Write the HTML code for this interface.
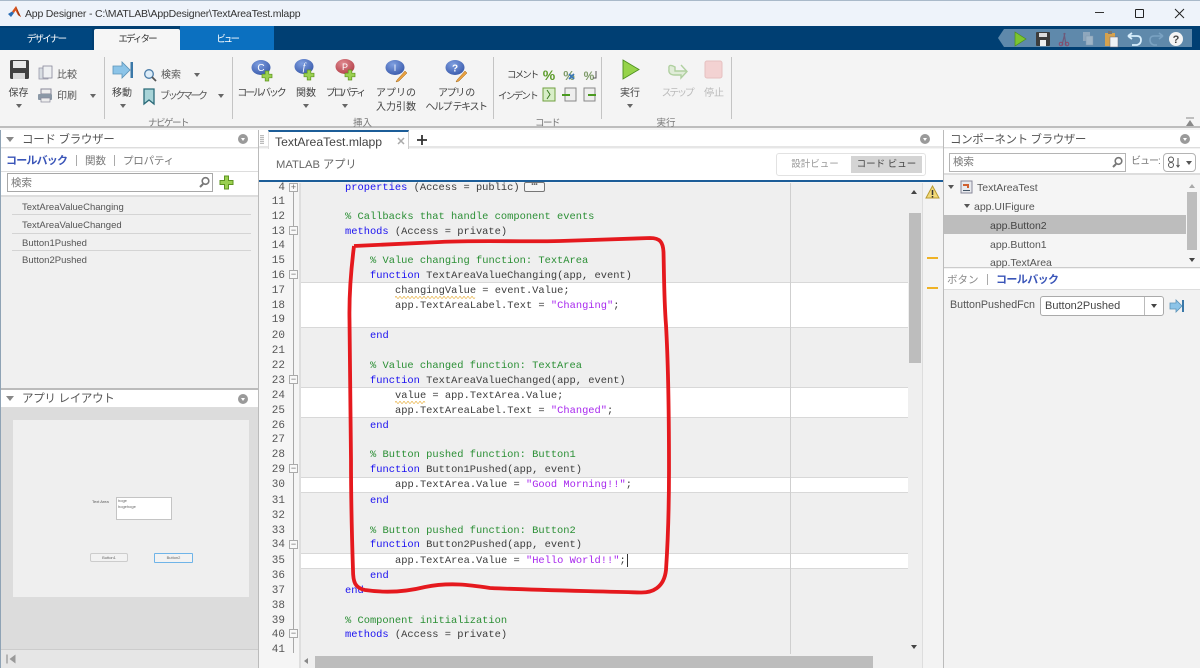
<!DOCTYPE html>
<html><head><meta charset="utf-8"><style>
*{box-sizing:border-box}
html,body{margin:0;padding:0}
body{width:1200px;height:668px;overflow:hidden;position:relative;background:#f4f4f4;font-family:"Liberation Sans","Noto Sans CJK JP",sans-serif;color:#444;filter:blur(.35px)}
.a{position:absolute;white-space:pre}
.t{position:absolute;white-space:pre;line-height:14px;font-size:10.5px;color:#444;margin-top:1px}
.r{margin-top:2px}
.c{text-align:center}
.l{position:absolute;left:345px;white-space:pre;font:10.4px/14px "Liberation Mono",monospace;color:#3c3c3c;margin-top:1px}
.n{position:absolute;left:262px;width:23px;text-align:right;font:11px/14px "Liberation Mono",monospace;color:#555;margin-top:1px}
.k{color:#1a10f0}.g{color:#2b8f35}.s{color:#a828ee}
.f{position:absolute;left:289px;width:9px;height:9px;border:1px solid #aaa;background:#f8f8f8;font:9px/7px "Liberation Sans";text-align:center;color:#666}
.w{position:absolute;left:301px;width:607px;background:#fff;border-top:1px solid #d8d8d8;border-bottom:1px solid #d8d8d8}
.v{position:absolute;width:1px;background:#c4c4c4;top:57px;height:62px}
.arrow{position:absolute;width:0;height:0;border-left:3.5px solid transparent;border-right:3.5px solid transparent;border-top:4px solid #666}
.hd{position:absolute;background:#fff;height:18px}
.dot{position:absolute;width:10px;height:10px;border-radius:50%;background:#9a9a9a}
.dot:after{content:"";position:absolute;left:2.5px;top:3.5px;border-left:2.5px solid transparent;border-right:2.5px solid transparent;border-top:3px solid #fff}
.sep{position:absolute;height:1px;background:#d4d4d4}
</style></head><body>

<!-- title bar -->
<div class="a" style="left:0;top:0;width:1200px;height:26px;background:#eef3fa;border-top:1px solid #a9b9c9"></div>
<svg class="a" style="left:7px;top:5px" width="15" height="14" viewBox="0 0 15 14"><path d="M1 9L5 6.5 7 8 4 12z" fill="#2a6db5"/><path d="M5 6.5L9 1l5 11-3-2-2.5-4.5L7 8z" fill="#d9541e"/><path d="M9 1l2.5 6L14 12 11 10z" fill="#a33a12"/></svg>
<div class="t" style="left:25px;top:6px;font-size:10.5px;color:#333;letter-spacing:-.2px">App Designer - C:\MATLAB\AppDesigner\TextAreaTest.mlapp</div>
<div class="a" style="left:1095px;top:12px;width:9px;height:1px;background:#333"></div>
<div class="a" style="left:1135px;top:9px;width:9px;height:9px;border:1px solid #222;border-radius:1px"></div>
<svg class="a" style="left:1174px;top:8px" width="11" height="11"><path d="M1 1L10 10M10 1L1 10" stroke="#222" stroke-width="1"/></svg>

<!-- tab bar -->
<div class="a" style="left:0;top:26px;width:1200px;height:24px;background:#003f73"></div>
<div class="a" style="left:0;top:28px;width:92px;height:22px;background:#00467f"></div>
<div class="t c r" style="left:0;top:31px;width:92px;color:#fff;font-size:9.5px;letter-spacing:-1.7px">デザイナー</div>
<div class="a" style="left:94px;top:29px;width:86px;height:21px;background:#f6f6f6;border-radius:2px 2px 0 0"></div>
<div class="t c r" style="left:94px;top:31px;width:86px;color:#333;font-size:9.5px;letter-spacing:-1.9px">エディター</div>
<div class="a" style="left:180px;top:26px;width:94px;height:24px;background:#0b70c0"></div>
<div class="t c r" style="left:180px;top:31px;width:94px;color:#fff;font-size:9.5px;letter-spacing:-2.4px">ビュー</div>

<!-- quick access -->
<svg class="a" style="left:998px;top:28px" width="194" height="20" viewBox="0 0 194 20">
<path d="M0 10L6 1H194V19H6z" fill="#5f89ab"/>
<path d="M17 4L28 11 17 18z" fill="#7cc52f" stroke="#4c8f1a" stroke-width=".7"/>
<rect x="38" y="4" width="14" height="14" rx="1" fill="#3c3c3c"/><rect x="41" y="5" width="8" height="4" fill="#ddd"/><rect x="42" y="12" width="6" height="6" fill="#eee"/>
<path d="M64 17L67 5M68 17L66 5" stroke="#6d5a7a" stroke-width="1.2"/><circle cx="63" cy="16" r="1.8" fill="none" stroke="#8a4a6a"/><circle cx="69" cy="16" r="1.8" fill="none" stroke="#8a4a6a"/>
<rect x="85" y="4" width="7" height="9" fill="#8ea7bd"/><rect x="88" y="8" width="7" height="9" fill="#9eb4c6" stroke="#7e98ae" stroke-width=".5"/>
<rect x="107" y="5" width="10" height="13" fill="#d6a24e"/><rect x="110" y="3" width="4" height="3" fill="#777"/><rect x="112" y="9" width="8" height="10" fill="#eef2f6" stroke="#667" stroke-width=".5"/>
<path d="M130 8H139Q143 8 143 12T139 17H134M130 8L134 5M130 8L134 11" fill="none" stroke="#d8eefc" stroke-width="1.8"/>
<path d="M165 8H156Q152 8 152 12T156 17H159M165 8L161 5M165 8L161 11" fill="none" stroke="#7aa2c2" stroke-width="1.6"/>
<circle cx="178" cy="11" r="7" fill="#f4f4f4"/><text x="178" y="15" font-size="11" font-weight="bold" fill="#444" text-anchor="middle" font-family="Liberation Sans">?</text>
</svg>

<!-- ribbon -->
<div class="a" style="left:0;top:50px;width:1200px;height:78px;background:#f4f4f4;border-bottom:2px solid #bdbdbd"></div>
<div class="v" style="left:104px"></div><div class="v" style="left:232px"></div><div class="v" style="left:493px"></div><div class="v" style="left:601px"></div><div class="v" style="left:731px"></div>

<svg class="a" style="left:0;top:50px" width="740" height="70" viewBox="0 50 740 70">
<defs>
<radialGradient id="bb" cx=".4" cy=".3" r=".8"><stop offset="0" stop-color="#7f9fe0"/><stop offset="1" stop-color="#3556a8"/></radialGradient>
<radialGradient id="rb" cx=".4" cy=".3" r=".8"><stop offset="0" stop-color="#e08a90"/><stop offset="1" stop-color="#b03a44"/></radialGradient>
</defs>
<!-- save -->
<rect x="10" y="60" width="19" height="19" rx="1.5" fill="#3f3f3f"/><rect x="13" y="61" width="13" height="7" fill="#e8e8e8"/><rect x="13" y="73" width="12" height="6" fill="#d8d8d8"/>
<!-- compare -->
<rect x="39" y="68" width="9" height="11" fill="#d8dde2" stroke="#99a" stroke-width=".8"/><rect x="43" y="66" width="9" height="12" fill="#eef0f2" stroke="#889" stroke-width=".8"/>
<!-- print -->
<rect x="41" y="89" width="10" height="5" fill="#eee" stroke="#889"/><rect x="38" y="94" width="14" height="6" rx="1" fill="#8b98a6"/><rect x="41" y="98" width="9" height="4" fill="#eee" stroke="#889" stroke-width=".7"/>
<!-- go to -->
<path d="M113 66H122V62L130 70 122 78V74H113z" fill="#8cc4e8" stroke="#5b93b8" stroke-width=".8"/><rect x="130.500" y="62" width="2.500" height="16" fill="#3a78a8"/>
<!-- find -->
<circle cx="149" cy="74" r="4.300" fill="#dcecf8" stroke="#4a7ca8" stroke-width="1.300"/><path d="M152 77L156 81" stroke="#555" stroke-width="1.800"/>
<!-- bookmark -->
<path d="M144 89H154V104L149 100 144 104z" fill="#a8d4d8" stroke="#2a6a78" stroke-width="1.300"/>
<!-- callback -->
<ellipse cx="261" cy="67.500" rx="9.500" ry="7.500" fill="url(#bb)"/><text x="261" y="71" font-size="10" fill="#fff" text-anchor="middle" font-family="Liberation Sans">C</text>
<path d="M265.200 71h3.600v3.200h3.200v3.600h-3.200v3.200h-3.600v-3.200h-3.200v-3.600h3.200z" fill="#9ad050" stroke="#5d9420" stroke-width=".7"/>
<!-- function -->
<ellipse cx="304" cy="66.500" rx="9.500" ry="7.500" fill="url(#bb)"/><text x="304" y="70" font-size="10" font-style="italic" fill="#fff" text-anchor="middle" font-family="Liberation Serif">f</text>
<path d="M307.200 70h3.600v3.200h3.200v3.600h-3.200v3.200h-3.600v-3.200h-3.200v-3.600h3.200z" fill="#9ad050" stroke="#5d9420" stroke-width=".7"/>
<!-- property -->
<ellipse cx="345" cy="66.500" rx="9.500" ry="7.500" fill="url(#rb)"/><text x="345" y="70" font-size="9" fill="#fff" text-anchor="middle" font-family="Liberation Sans">P</text>
<path d="M348.200 70h3.600v3.200h3.200v3.600h-3.200v3.200h-3.600v-3.200h-3.200v-3.600h3.200z" fill="#9ad050" stroke="#5d9420" stroke-width=".7"/>
<!-- input args -->
<ellipse cx="395" cy="67.500" rx="9.500" ry="7.500" fill="url(#bb)"/><text x="395" y="71" font-size="9" fill="#fff" text-anchor="middle" font-family="Liberation Sans">I</text>
<path d="M397 80L405 71 407 73 399 81 396 82z" fill="#e8a040" stroke="#a06a20" stroke-width=".5"/>
<!-- help -->
<ellipse cx="455" cy="67.500" rx="9.500" ry="7.500" fill="url(#bb)"/><text x="455" y="71.500" font-size="10" font-weight="bold" fill="#fff" text-anchor="middle" font-family="Liberation Sans">?</text>
<path d="M457 80L465 71 467 73 459 81 456 82z" fill="#e8a040" stroke="#a06a20" stroke-width=".5"/>
<!-- comment icons -->
<text x="549" y="80" font-size="14" font-weight="bold" fill="#5a9a28" text-anchor="middle" font-family="Liberation Sans">%</text>
<text x="569" y="80" font-size="13" font-weight="bold" fill="#7d9a68" text-anchor="middle" font-family="Liberation Sans">%</text><path d="M569 74l5 5m0-5l-5 5" stroke="#3a78b8" stroke-width="1.600"/>
<text x="589" y="80" font-size="12" font-weight="bold" fill="#7d9a68" text-anchor="middle" font-family="Liberation Sans">%</text><path d="M596 71v7h-3" fill="none" stroke="#555"/>
<rect x="543" y="88" width="12" height="13" fill="#d8eec8" stroke="#70a040"/><path d="M547 90l3 4.500-3 4.500" fill="none" stroke="#3a7a20"/>
<rect x="565" y="88" width="11" height="13" fill="#eee" stroke="#888"/><path d="M562 95h8" stroke="#4a9a20" stroke-width="2"/>
<rect x="584" y="88" width="11" height="13" fill="#eee" stroke="#888"/><path d="M588 95h8" stroke="#4a9a20" stroke-width="2"/>
<!-- run -->
<path d="M623 60L639 69.500 623 79z" fill="#96d34a" stroke="#4d9020" stroke-width=".9"/>
<!-- step -->
<path d="M686 71H675V67Q668 63 669 69Q668 75 675 75H681V78L687 71.500 681 65" fill="#e0ecd8" stroke="#b0d0a0" stroke-width="1.400"/>
<!-- stop -->
<rect x="705" y="61" width="17" height="17" rx="2" fill="#f3d2d2" stroke="#e6c0c0"/>
</svg>

<div class="t c r" style="left:0;top:85px;width:37px;font-size:10px">保存</div>
<div class="arrow" style="left:16px;top:104px"></div>
<div class="t r" style="left:57px;top:67px;font-size:10px;color:#555">比較</div>
<div class="t r" style="left:57px;top:88px;font-size:10px;color:#555">印刷</div>
<div class="arrow" style="left:90px;top:94px"></div>
<div class="t c r" style="left:108px;top:85px;width:28px;font-size:10px">移動</div>
<div class="arrow" style="left:120px;top:104px"></div>
<div class="t r" style="left:161px;top:67px;font-size:10px;color:#555">検索</div>
<div class="arrow" style="left:194px;top:73px"></div>
<div class="t r" style="left:160px;top:88px;font-size:10px;color:#555;letter-spacing:-2.400px">ブックマーク</div>
<div class="arrow" style="left:218px;top:94px"></div>
<div class="t c r" style="left:104px;top:115px;width:128px;font-size:9.500px;color:#777;letter-spacing:-1.500px">ナビゲート</div>
<div class="t c r" style="left:236px;top:85px;width:50px;font-size:10px;letter-spacing:-2.100px">コールバック</div>
<div class="t c r" style="left:292px;top:85px;width:28px;font-size:10px">関数</div>
<div class="arrow" style="left:303px;top:104px"></div>
<div class="t c r" style="left:322px;top:85px;width:46px;font-size:10px;letter-spacing:-2.200px">プロパティ</div>
<div class="arrow" style="left:342px;top:104px"></div>
<div class="t c r" style="left:374px;top:85px;width:44px;font-size:10px;line-height:14px;white-space:pre">アプリの
入力引数</div>
<div class="t c r" style="left:424px;top:85px;width:64px;font-size:10px;line-height:14px;letter-spacing:-1.400px">アプリ の
ヘルプ テキスト</div>
<div class="t c r" style="left:232px;top:115px;width:261px;font-size:9.500px;color:#777">挿入</div>
<div class="t r" style="left:507px;top:67px;font-size:9.500px;letter-spacing:-1.900px">コメント</div>
<div class="t r" style="left:498px;top:88px;font-size:9.500px;letter-spacing:-1.700px">インデント</div>
<div class="t c r" style="left:493px;top:115px;width:108px;font-size:9.500px;color:#777;letter-spacing:-1.500px">コード</div>
<div class="t c r" style="left:615px;top:85px;width:30px;font-size:10px">実行</div>
<div class="arrow" style="left:627px;top:104px"></div>
<div class="t c r" style="left:655px;top:85px;width:44px;font-size:10px;color:#bbb;letter-spacing:-2.300px">ステップ</div>
<div class="t c r" style="left:700px;top:85px;width:28px;font-size:10px;color:#bbb">停止</div>
<div class="t c r" style="left:601px;top:115px;width:130px;font-size:9.500px;color:#777">実行</div>
<svg class="a" style="left:1185px;top:117px" width="10" height="10"><path d="M1 1h8" stroke="#888"/><path d="M5 3L9 9H1z" fill="#888"/></svg>

<!-- left panel -->
<div class="a" style="left:0;top:130px;width:259px;height:538px;background:#f0f0f0;border-right:1px solid #bbb;border-left:1px solid #8fa3b5"></div>
<div class="hd" style="left:1px;top:130px;width:257px;border-bottom:1px solid #ddd"></div>
<div class="arrow" style="left:6px;top:137px;border-top-color:#888;border-left-width:4px;border-right-width:4px;border-top-width:5px"></div>
<div class="t r" style="left:22px;top:131px;font-size:11.500px;color:#555;letter-spacing:-.3px">コード ブラウザー</div>
<div class="dot" style="left:238px;top:134px"></div>
<div class="a" style="left:1px;top:149px;width:257px;height:23px;background:#fff;border-bottom:1px solid #ddd"></div>
<div class="t" style="left:6px;top:153px;font-size:11px;font-weight:bold;color:#3a55b8;letter-spacing:-.8px">コールバック</div>
<div class="a" style="left:76px;top:155px;width:1px;height:11px;background:#aaa"></div>
<div class="t" style="left:85px;top:153px;font-size:10.500px;color:#777">関数</div>
<div class="a" style="left:114px;top:155px;width:1px;height:11px;background:#aaa"></div>
<div class="t" style="left:123px;top:153px;font-size:10.500px;color:#777;letter-spacing:-.2px">プロパティ</div>
<div class="a" style="left:1px;top:172px;width:257px;height:25px;background:#fff;border-bottom:2px solid #ddd"></div>
<div class="a" style="left:7px;top:173px;width:206px;height:19px;background:#fff;border:1px solid #a8a8a8"></div>
<div class="t" style="left:11px;top:175px;font-size:10.500px;color:#777">検索</div>
<svg class="a" style="left:198px;top:176px" width="13" height="13"><circle cx="7.500" cy="5" r="3.300" fill="none" stroke="#777" stroke-width="1.600"/><path d="M5 8L2 11" stroke="#777" stroke-width="2"/></svg>
<svg class="a" style="left:219px;top:175px" width="16" height="16"><path d="M5.500 1h4v4.500H14v4H9.500V14h-4V9.500H1v-4h4.500z" fill="#9ad050" stroke="#5d9420"/></svg>
<div class="t r" style="left:22px;top:199px;font-size:9.500px;color:#555">TextAreaValueChanging</div>
<div class="sep" style="left:12px;top:214px;width:239px"></div>
<div class="t r" style="left:22px;top:217px;font-size:9.500px;color:#555">TextAreaValueChanged</div>
<div class="sep" style="left:12px;top:233px;width:239px"></div>
<div class="t r" style="left:22px;top:235px;font-size:9.500px;color:#555">Button1Pushed</div>
<div class="sep" style="left:12px;top:250px;width:239px"></div>
<div class="t r" style="left:22px;top:252px;font-size:9.500px;color:#555">Button2Pushed</div>

<div class="a" style="left:1px;top:388px;width:257px;height:261px;background:#dcdcdc;border-top:2px solid #bbb"></div>
<div class="hd" style="left:1px;top:390px;width:257px;border-bottom:1px solid #ddd"></div>
<div class="arrow" style="left:6px;top:396px;border-top-color:#888;border-left-width:4px;border-right-width:4px;border-top-width:5px"></div>
<div class="t r" style="left:22px;top:390px;font-size:11.500px;color:#555;letter-spacing:-.3px">アプリ レイアウト</div>
<div class="dot" style="left:238px;top:394px"></div>
<div class="a" style="left:13px;top:420px;width:236px;height:177px;background:#efefef"></div>
<div class="a" style="left:92px;top:499px;font-size:4px;line-height:5px;color:#555">Text Area</div>
<div class="a" style="left:116px;top:497px;width:56px;height:23px;background:#fff;border:1px solid #c4c4c4"></div>
<div class="a" style="left:118px;top:498px;font-size:4px;line-height:6px;color:#666">hoge
hogehoge</div>
<div class="a" style="left:90px;top:553px;width:38px;height:9px;background:#f2f2f2;border:1px solid #ccc;border-radius:2px;font-size:4px;line-height:7px;text-align:center;color:#666">Button1</div>
<div class="a" style="left:154px;top:553px;width:39px;height:10px;background:#f2f2f2;border:1px solid #6fb4e8;border-radius:1px;font-size:4px;line-height:8px;text-align:center;color:#666">Button2</div>
<div class="a" style="left:1px;top:649px;width:257px;height:19px;background:#e6e6e6;border-top:1px solid #ccc"></div>
<svg class="a" style="left:6px;top:654px" width="11" height="10"><path d="M1 .5V9.500" stroke="#999" stroke-width="1.300"/><path d="M9.500 .5V9.500L3.500 5z" fill="#999"/></svg>

<!-- left resize gutter -->
<div class="a" style="left:259px;top:130px;width:9px;height:52px;background:#f4f4f4"></div>
<div class="a" style="left:259px;top:130px;width:684px;height:18px;background:#fff;border-bottom:2px solid #e6e6e6"></div>
<div class="a" style="left:260px;top:135px;width:4px;height:9px;background:repeating-linear-gradient(#bbb 0 1px,#eee 1px 2px)"></div>

<!-- editor tab -->
<div class="a" style="left:268px;top:130px;width:141px;height:19px;background:#fff;border-top:2px solid #1c5d98;border-right:1px solid #ccc;border-left:1px solid #ddd"></div>
<div class="t" style="left:275px;top:134px;font-size:12.200px;color:#444">TextAreaTest.mlapp</div>
<svg class="a" style="left:397px;top:137px" width="8" height="8"><path d="M1 1L7 7M7 1L1 7" stroke="#aaa" stroke-width="1.500"/></svg>
<svg class="a" style="left:416px;top:134px" width="12" height="12"><path d="M6 1V11M1 6H11" stroke="#333" stroke-width="1.800"/></svg>
<div class="dot" style="left:920px;top:134px"></div>

<!-- editor sub-header -->
<div class="a" style="left:259px;top:149px;width:684px;height:33px;background:#fff;border-bottom:2px solid #1c5d98"></div>
<div class="t" style="left:276px;top:157px;font-size:11.200px;color:#666">MATLAB アプリ</div>
<div class="a" style="left:776px;top:153px;width:150px;height:23px;background:#fff;border:1px solid #e2e2e2;border-radius:3px"></div>
<div class="t c" style="left:782px;top:157px;width:66px;font-size:9.500px;color:#999">設計ビュー</div>
<div class="a" style="left:851px;top:156px;width:71px;height:17px;background:#d4d4d4"></div>
<div class="t c" style="left:851px;top:157px;width:71px;font-size:9.500px;color:#444">コード ビュー</div>

<!-- editor body -->
<div class="a" style="left:259px;top:183px;width:684px;height:485px;background:#efefef"></div>
<div class="a" style="left:259px;top:183px;width:40px;height:485px;background:#f5f5f5"></div>
<div class="a" style="left:293px;top:183px;width:1px;height:470px;background:#a8a8a8"></div>
<div class="a" style="left:299px;top:183px;width:2px;height:485px;background:#dedede"></div>

<div class="w" style="top:282px;height:46px"></div>
<div class="w" style="top:387px;height:31px"></div>
<div class="w" style="top:477px;height:16px"></div>
<div class="w" style="top:553px;height:16px"></div>
<div class="a" style="left:790px;top:183px;width:1px;height:471px;background:#cfcfcf"></div>

<div class="n" style="top:180px">4</div><div class="f" style="top:183px">+</div>
<div class="n" style="top:194px">11</div>
<div class="n" style="top:209px">12</div>
<div class="n" style="top:224px">13</div><div class="f" style="top:226px">−</div>
<div class="n" style="top:238px">14</div>
<div class="n" style="top:253px">15</div>
<div class="n" style="top:268px">16</div><div class="f" style="top:270px">−</div>
<div class="n" style="top:283px">17</div>
<div class="n" style="top:298px">18</div>
<div class="n" style="top:312px">19</div>
<div class="n" style="top:328px">20</div>
<div class="n" style="top:343px">21</div>
<div class="n" style="top:358px">22</div>
<div class="n" style="top:373px">23</div><div class="f" style="top:375px">−</div>
<div class="n" style="top:388px">24</div>
<div class="n" style="top:403px">25</div>
<div class="n" style="top:418px">26</div>
<div class="n" style="top:432px">27</div>
<div class="n" style="top:447px">28</div>
<div class="n" style="top:462px">29</div><div class="f" style="top:464px">−</div>
<div class="n" style="top:477px">30</div>
<div class="n" style="top:493px">31</div>
<div class="n" style="top:508px">32</div>
<div class="n" style="top:523px">33</div>
<div class="n" style="top:537px">34</div><div class="f" style="top:540px">−</div>
<div class="n" style="top:553px">35</div>
<div class="n" style="top:568px">36</div>
<div class="n" style="top:583px">37</div>
<div class="n" style="top:598px">38</div>
<div class="n" style="top:613px">39</div>
<div class="n" style="top:627px">40</div><div class="f" style="top:629px">−</div>
<div class="n" style="top:642px">41</div>

<div class="l" style="top:180px"><span class="k">properties</span> (Access = public)</div>
<div class="a" style="left:524px;top:182px;width:21px;height:10px;border:1px solid #777;border-radius:2px;background:#f4f4f4;font:bold 6px/5px 'Liberation Sans';text-align:center;color:#666">•••</div>
<div class="l g" style="top:209px">% Callbacks that handle component events</div>
<div class="l" style="top:224px"><span class="k">methods</span> (Access = private)</div>
<div class="l g" style="top:253px;left:370px">% Value changing function: TextArea</div>
<div class="l" style="top:268px;left:370px"><span class="k">function</span> TextAreaValueChanging(app, event)</div>
<div class="l" style="top:283px;left:395px">changingValue = event.Value;</div>
<div class="l" style="top:298px;left:395px">app.TextAreaLabel.Text = <span class="s">"Changing"</span>;</div>
<div class="l k" style="top:328px;left:370px">end</div>
<div class="l g" style="top:358px;left:370px">% Value changed function: TextArea</div>
<div class="l" style="top:373px;left:370px"><span class="k">function</span> TextAreaValueChanged(app, event)</div>
<div class="l" style="top:388px;left:395px">value = app.TextArea.Value;</div>
<div class="l" style="top:403px;left:395px">app.TextAreaLabel.Text = <span class="s">"Changed"</span>;</div>
<div class="l k" style="top:418px;left:370px">end</div>
<div class="l g" style="top:447px;left:370px">% Button pushed function: Button1</div>
<div class="l" style="top:462px;left:370px"><span class="k">function</span> Button1Pushed(app, event)</div>
<div class="l" style="top:477px;left:395px">app.TextArea.Value = <span class="s">"Good Morning!!"</span>;</div>
<div class="l k" style="top:493px;left:370px">end</div>
<div class="l g" style="top:523px;left:370px">% Button pushed function: Button2</div>
<div class="l" style="top:537px;left:370px"><span class="k">function</span> Button2Pushed(app, event)</div>
<div class="l" style="top:553px;left:395px">app.TextArea.Value = <span class="s">"Hello World!!"</span>;</div>
<div class="a" style="left:627px;top:554px;width:1px;height:13px;background:#333"></div>
<div class="l k" style="top:568px;left:370px">end</div>
<div class="l k" style="top:583px">end</div>
<div class="l g" style="top:613px">% Component initialization</div>
<div class="l" style="top:627px"><span class="k">methods</span> (Access = private)</div>

<svg class="a" style="left:395px;top:296px" width="82" height="3"><path d="M0 1.500q1-2 2 0t2 0 2 0 2 0 2 0 2 0 2 0 2 0 2 0 2 0 2 0 2 0 2 0 2 0 2 0 2 0 2 0 2 0 2 0 2 0 2 0 2 0 2 0 2 0 2 0 2 0 2 0 2 0 2 0 2 0 2 0 2 0 2 0 2 0 2 0 2 0 2 0 2 0 2 0 2 0" fill="none" stroke="#e8b040" stroke-width=".7"/></svg>
<svg class="a" style="left:395px;top:401px" width="32" height="3"><path d="M0 1.500q1-2 2 0t2 0 2 0 2 0 2 0 2 0 2 0 2 0 2 0 2 0 2 0 2 0 2 0 2 0 2 0" fill="none" stroke="#e8b040" stroke-width=".7"/></svg>

<!-- vertical scrollbar -->
<div class="a" style="left:909px;top:183px;width:12px;height:470px;background:#efefef"></div>
<div class="a" style="left:909px;top:213px;width:12px;height:150px;background:#bdbdbd"></div>
<div class="arrow" style="left:911px;top:190px;border-top:0;border-bottom:4px solid #444"></div>
<div class="arrow" style="left:911px;top:645px;border-top-color:#444"></div>
<!-- message strip -->
<div class="a" style="left:922px;top:183px;width:21px;height:485px;background:#f3f3f3;border-left:1px solid #ddd"></div>
<svg class="a" style="left:925px;top:185px" width="15" height="14"><path d="M7.500 1L14 13H1z" fill="#f2da7a" stroke="#b89a30"/><path d="M7.500 5V10M7.500 11V12.500" stroke="#333" stroke-width="1.500"/></svg>
<div class="a" style="left:927px;top:257px;width:11px;height:2px;background:#efb225"></div>
<div class="a" style="left:927px;top:287px;width:11px;height:2px;background:#efb225"></div>
<!-- horizontal scrollbar -->
<div class="a" style="left:301px;top:654px;width:620px;height:14px;background:#efefef"></div>
<div class="a" style="left:315px;top:656px;width:558px;height:12px;background:#bdbdbd"></div>
<div class="arrow" style="left:304px;top:658px;border:0;border-top:3.500px solid transparent;border-bottom:3.500px solid transparent;border-right:4px solid #888"></div>

<!-- red annotation -->
<svg class="a" style="left:0;top:0" width="1200" height="668"><path d="M354 246C375 245 400 244 440 242C480 240 520 242 560 241C590 240 625 239 650 238C660 238 663 242 663.500 252C664 270 664 300 666 325C668 360 669 420 669 470C669 510 668 540 666 570C664 588 652 593 640 592.500C590 591 530 590 490 588C470 585 450 582 425 587C405 592 385 593 365 590C355 588 353 582 353 570C352 540 351 500 351 460C351 420 350 370 349.500 320C349 295 351 270 354 246" fill="none" stroke="#e5191e" stroke-width="3.800" stroke-linejoin="round"/></svg>

<!-- right panel -->
<div class="a" style="left:943px;top:130px;width:257px;height:538px;background:#f2f2f2;border-left:1px solid #bbb"></div>
<div class="hd" style="left:944px;top:130px;width:256px;border-bottom:1px solid #ddd"></div>
<div class="t r" style="left:950px;top:131px;font-size:11.500px;color:#555;letter-spacing:-.4px">コンポーネント ブラウザー</div>
<div class="dot" style="left:1180px;top:134px"></div>
<div class="a" style="left:944px;top:149px;width:256px;height:26px;background:#fff;border-bottom:2px solid #ddd"></div>
<div class="a" style="left:949px;top:153px;width:177px;height:19px;background:#fff;border:1px solid #b4b4b4"></div>
<div class="t" style="left:953px;top:154px;font-size:10.500px;color:#777">検索</div>
<svg class="a" style="left:1111px;top:156px" width="13" height="13"><circle cx="7.500" cy="5" r="3.300" fill="none" stroke="#777" stroke-width="1.600"/><path d="M5 8L2 11" stroke="#777" stroke-width="2"/></svg>
<div class="t" style="left:1131px;top:154px;font-size:10px;color:#777;letter-spacing:-1px">ビュー:</div>
<div class="a" style="left:1163px;top:153px;width:33px;height:19px;background:#fff;border:1px solid #b4b4b4;border-radius:4px"></div>
<svg class="a" style="left:1165px;top:156px" width="18" height="13"><circle cx="6" cy="3.500" r="2.500" fill="none" stroke="#555"/><circle cx="6" cy="9" r="2.500" fill="none" stroke="#555"/><path d="M13 2V11M11.500 9L13 11 14.500 9" fill="none" stroke="#555"/></svg>
<div class="arrow" style="left:1186px;top:161px;border-top-color:#555"></div>
<div class="a" style="left:944px;top:175px;width:256px;height:93px;background:#f5f5f5;border-bottom:1px solid #ccc"></div>
<div class="arrow" style="left:948px;top:185px;border-top-color:#555"></div>
<svg class="a" style="left:960px;top:180px" width="13" height="14"><rect x="1" y="1" width="11" height="12" fill="#e8eaee" stroke="#889"/><path d="M3 5h5v3" stroke="#d06030" stroke-width="2" fill="none"/><path d="M3 10.500h7" stroke="#456"/></svg>
<div class="t" style="left:977px;top:180px;font-size:10.500px;color:#555">TextAreaTest</div>
<div class="arrow" style="left:964px;top:204px;border-top-color:#555"></div>
<div class="t" style="left:974px;top:199px;font-size:10.500px;color:#555">app.UIFigure</div>
<div class="a" style="left:944px;top:215px;width:242px;height:19px;background:#bdbdbd"></div>
<div class="t" style="left:990px;top:218px;font-size:10.500px;color:#444">app.Button2</div>
<div class="t" style="left:990px;top:237px;font-size:10.500px;color:#555">app.Button1</div>
<div class="t" style="left:990px;top:255px;font-size:10.500px;color:#555">app.TextArea</div>
<div class="a" style="left:1187px;top:192px;width:10px;height:58px;background:#bdbdbd"></div>
<div class="arrow" style="left:1189px;top:184px;border-top:0;border-bottom:4px solid #aaa"></div>
<div class="arrow" style="left:1189px;top:258px;border-top-color:#444"></div>
<div class="a" style="left:944px;top:269px;width:256px;height:21px;background:#fff;border-bottom:1px solid #ddd"></div>
<div class="t" style="left:947px;top:272px;font-size:10.500px;color:#888">ボタン</div>
<div class="a" style="left:987px;top:274px;width:1px;height:11px;background:#aaa"></div>
<div class="t" style="left:996px;top:272px;font-size:11px;font-weight:bold;color:#3a55b8;letter-spacing:-.6px">コールバック</div>
<div class="t" style="left:950px;top:297px;font-size:10.700px;color:#555">ButtonPushedFcn</div>
<div class="a" style="left:1040px;top:296px;width:124px;height:20px;background:#fff;border:1px solid #aaa;border-radius:3px"></div>
<div class="a" style="left:1144px;top:297px;width:1px;height:18px;background:#bbb"></div>
<div class="t" style="left:1045px;top:298px;font-size:11px;color:#444">Button2Pushed</div>
<div class="arrow" style="left:1151px;top:304px;border-top-color:#444"></div>
<svg class="a" style="left:1169px;top:299px" width="16" height="14"><path d="M1 4H7V1L13 7 7 13V10H1z" fill="#8cc4e8" stroke="#5b93b8" stroke-width=".8"/><rect x="13" y="1" width="2" height="12" fill="#3a78a8"/></svg>

</body></html>
